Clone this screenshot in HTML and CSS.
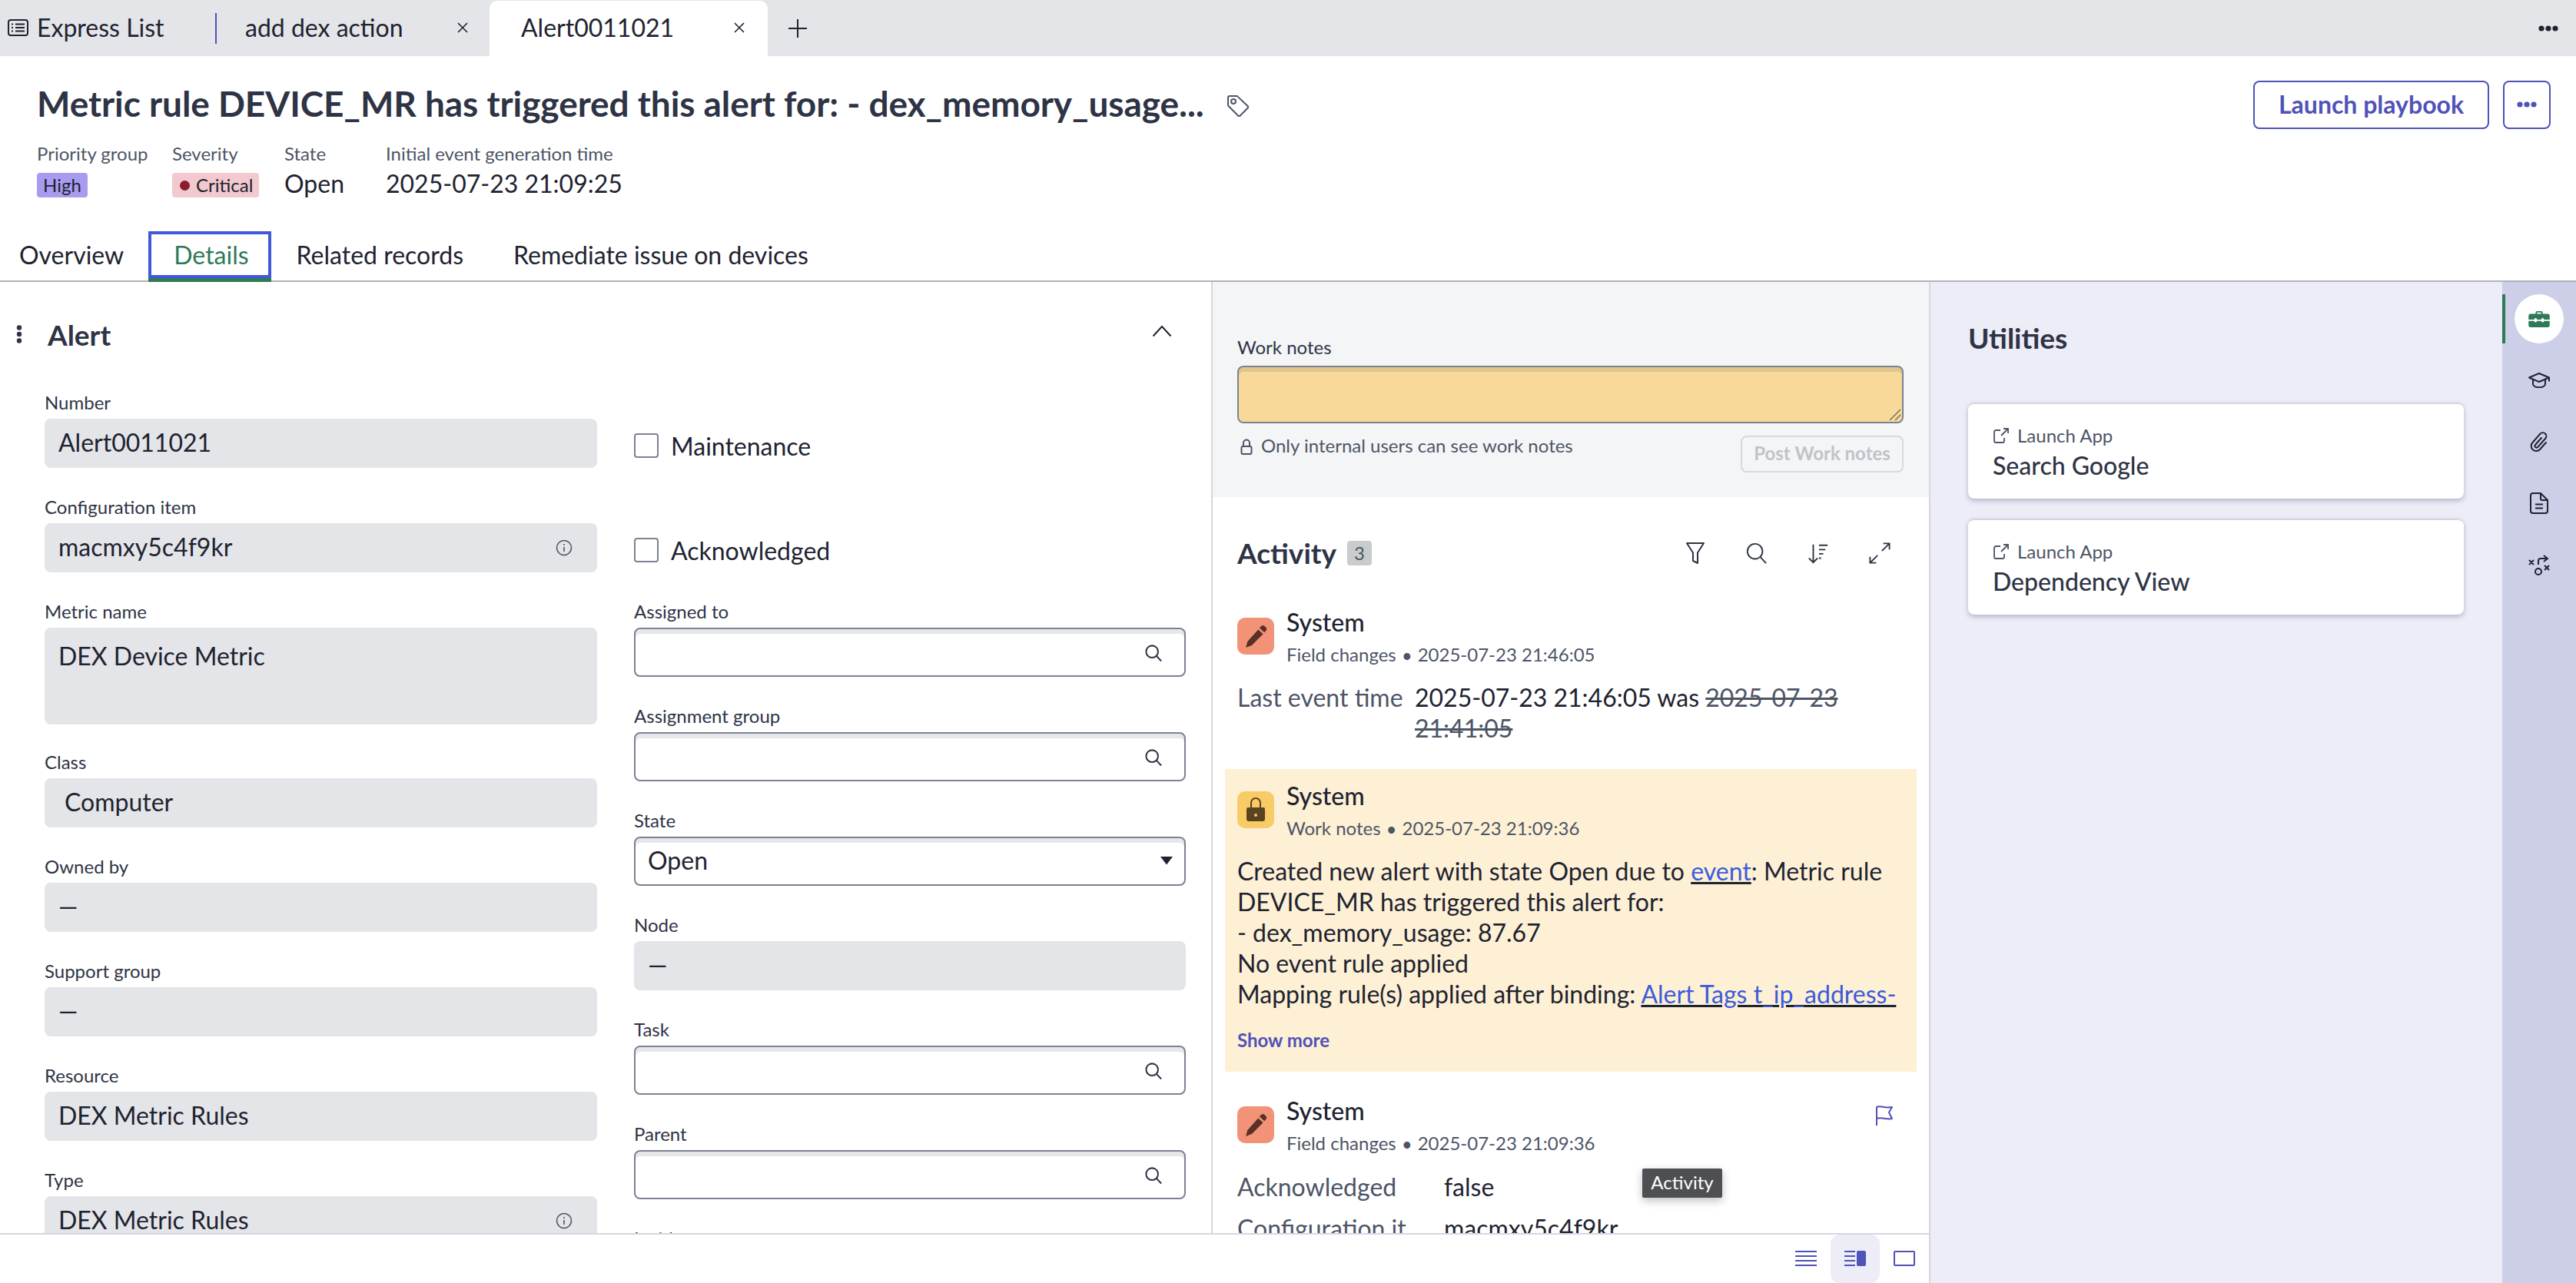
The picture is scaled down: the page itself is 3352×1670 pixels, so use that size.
FILE: index.html
```html
<!DOCTYPE html>
<html>
<head>
    <title>Alert0011021</title>
    <link rel="stylesheet" href="styles.css">
</head>
<body>
    <div class="tabbar">
        <div class="tab tab-home">
            <svg class="list-icon" width="27" height="22" viewBox="0 0 27 22" fill="none" stroke="#1e2330" stroke-width="2"><rect x="1" y="1" width="25" height="20" rx="3"/><path d="M10 6.500h12M10 11h12M10 15.500h12M5 6.500h2M5 11h2M5 15.500h2"/></svg>
            <span>Express List</span>
        </div>
        <div class="tab tab-dex">
            <span>add dex action</span>
            <svg width="16" height="16" viewBox="0 0 16 16" fill="none" stroke="#1e2330" stroke-width="1.600"><path d="M2 2l12 12M14 2L2 14"/></svg>
        </div>
        <div class="tab tab-current">
            <span>Alert0011021</span>
            <svg width="16" height="16" viewBox="0 0 16 16" fill="none" stroke="#1e2330" stroke-width="1.600"><path d="M2 2l12 12M14 2L2 14"/></svg>
        </div>
        <svg class="plus" width="26" height="26" viewBox="0 0 26 26" fill="none" stroke="#1e2330" stroke-width="2"><path d="M13 1v24M1 13h24"/></svg>
        <svg class="tabbar-more" width="26" height="8" viewBox="0 0 26 8" fill="#1e2330"><circle cx="4" cy="4" r="3.600"/><circle cx="13" cy="4" r="3.600"/><circle cx="22" cy="4" r="3.600"/></svg>
    </div>

    <div class="header">
        <div class="title-row">
            <h1>Metric rule DEVICE_MR has triggered this alert for: - dex_memory_usage...</h1>
            <svg class="tag-icon" width="28" height="28" viewBox="0 0 28 28" fill="none" stroke="#4d5566" stroke-width="2" stroke-linejoin="round"><path d="M3 1h9a2 2 0 0 1 1.500.6L26.500 14a2 2 0 0 1 0 2.800L16.800 26.500a2 2 0 0 1-2.800 0L1.600 14A2 2 0 0 1 1 12.500V3a2 2 0 0 1 2-2z"/><circle cx="8" cy="8" r="3"/></svg>
            <button class="btn-outline btn-playbook">Launch playbook</button>
            <button class="btn-outline btn-more">
                <svg width="26" height="8" viewBox="0 0 26 8" fill="#4f52b8"><circle cx="4" cy="4" r="3.600"/><circle cx="13" cy="4" r="3.600"/><circle cx="22" cy="4" r="3.600"/></svg>
            </button>
        </div>
        <div class="meta">
            <div class="meta-item meta-priority">
                <div class="meta-label">Priority group</div>
                <div class="badge badge-high">High</div>
            </div>
            <div class="meta-item meta-severity">
                <div class="meta-label">Severity</div>
                <div class="badge badge-critical"><i class="dot"></i>Critical</div>
            </div>
            <div class="meta-item meta-state">
                <div class="meta-label">State</div>
                <div class="meta-value">Open</div>
            </div>
            <div class="meta-item">
                <div class="meta-label">Initial event generation time</div>
                <div class="meta-value">2025-07-23 21:09:25</div>
            </div>
        </div>
    </div>

    <div class="nav">
        <div class="nav-tab nav-first">Overview</div>
        <div class="nav-tab nav-active">Details</div>
        <div class="nav-tab">Related records</div>
        <div class="nav-tab">Remediate issue on devices</div>
    </div>

    <div class="main">
        <div class="work-area">
            <div class="panes">
                <div class="form-pane">
                    <div class="section-head">
                        <svg class="kebab" width="8" height="24" viewBox="0 0 8 24" fill="#2e3445"><circle cx="4" cy="3.500" r="3.200"/><circle cx="4" cy="12" r="3.200"/><circle cx="4" cy="20.500" r="3.200"/></svg>
                        <h2>Alert</h2>
                        <svg class="chevron" width="26" height="16" viewBox="0 0 26 16" fill="none" stroke="#1e2330" stroke-width="2"><path d="M1.500 14.500 13 2l11.500 12.500"/></svg>
                    </div>
                    <div class="form-grid">
                        <div class="form-col">
                            <div class="field">
                                <label>Number</label>
                                <div class="input readonly">Alert0011021</div>
                            </div>
                            <div class="field">
                                <label>Configuration item</label>
                                <div class="input readonly">macmxy5c4f9kr
                                    <svg class="info" width="22" height="22" viewBox="0 0 22 22" fill="none" stroke="#4d5566" stroke-width="1.600"><circle cx="11" cy="11" r="9.500"/><path d="M11 10v6M11 6v2"/></svg>
                                </div>
                            </div>
                            <div class="field field-tall">
                                <label>Metric name</label>
                                <div class="input readonly input-tall">DEX Device Metric</div>
                            </div>
                            <div class="field">
                                <label>Class</label>
                                <div class="input readonly input-class">Computer</div>
                            </div>
                            <div class="field">
                                <label>Owned by</label>
                                <div class="input readonly">—</div>
                            </div>
                            <div class="field">
                                <label>Support group</label>
                                <div class="input readonly">—</div>
                            </div>
                            <div class="field">
                                <label>Resource</label>
                                <div class="input readonly">DEX Metric Rules</div>
                            </div>
                            <div class="field">
                                <label>Type</label>
                                <div class="input readonly">DEX Metric Rules
                                    <svg class="info" width="22" height="22" viewBox="0 0 22 22" fill="none" stroke="#4d5566" stroke-width="1.600"><circle cx="11" cy="11" r="9.500"/><path d="M11 10v6M11 6v2"/></svg>
                                </div>
                            </div>
                        </div>
                        <div class="form-col">
                            <div class="check-field"><span class="checkbox"></span>Maintenance</div>
                            <div class="check-field"><span class="checkbox"></span>Acknowledged</div>
                            <div class="field">
                                <label>Assigned to</label>
                                <div class="input editable">
                                    <svg class="search" width="22" height="22" viewBox="0 0 24 24" fill="none" stroke="#2e3445" stroke-width="2.200"><circle cx="10" cy="10" r="8.500"/><path d="M16 16l7 7.500"/></svg>
                                </div>
                            </div>
                            <div class="field">
                                <label>Assignment group</label>
                                <div class="input editable">
                                    <svg class="search" width="22" height="22" viewBox="0 0 24 24" fill="none" stroke="#2e3445" stroke-width="2.200"><circle cx="10" cy="10" r="8.500"/><path d="M16 16l7 7.500"/></svg>
                                </div>
                            </div>
                            <div class="field">
                                <label>State</label>
                                <div class="input editable">Open
                                    <svg class="caret" width="18" height="12" viewBox="0 0 18 12" fill="#1e2330"><path d="M1 1h16l-8 10.500z"/></svg>
                                </div>
                            </div>
                            <div class="field">
                                <label>Node</label>
                                <div class="input readonly">—</div>
                            </div>
                            <div class="field">
                                <label>Task</label>
                                <div class="input editable">
                                    <svg class="search" width="22" height="22" viewBox="0 0 24 24" fill="none" stroke="#2e3445" stroke-width="2.200"><circle cx="10" cy="10" r="8.500"/><path d="M16 16l7 7.500"/></svg>
                                </div>
                            </div>
                            <div class="field">
                                <label>Parent</label>
                                <div class="input editable">
                                    <svg class="search" width="22" height="22" viewBox="0 0 24 24" fill="none" stroke="#2e3445" stroke-width="2.200"><circle cx="10" cy="10" r="8.500"/><path d="M16 16l7 7.500"/></svg>
                                </div>
                            </div>
                            <div class="field">
                                <label>Incident</label>
                            </div>
                        </div>
                    </div>
                </div>

                <div class="activity-pane">
                    <div class="compose">
                        <label>Work notes</label>
                        <div class="notes-box">
                            <svg class="grip" width="16" height="16" viewBox="0 0 16 16" fill="none" stroke="#6a6a60" stroke-width="1.400"><path d="M1 15 15 1M8 15l7-7"/></svg>
                        </div>
                        <div class="compose-foot">
                            <svg width="16" height="24" viewBox="0 0 16 24" fill="none" stroke="#4d5566" stroke-width="2"><rect x="1.500" y="11" width="13" height="10" rx="2"/><path d="M4 11V6.500a4 4 0 0 1 8 0V11"/></svg>
                            <span>Only internal users can see work notes</span>
                            <button class="btn-disabled">Post Work notes</button>
                        </div>
                    </div>

                    <div class="activity-head">
                        <h2>Activity</h2>
                        <span class="count">3</span>
                        <div class="activity-tools">
                            <svg width="28" height="30" viewBox="0 0 26 30" fill="none" stroke="#2e3445" stroke-width="2" stroke-linejoin="round"><path d="M2 2h22l-8 12.500V28l-6-3V14.500z"/></svg>
                            <svg width="28" height="28" viewBox="0 0 30 30" fill="none" stroke="#2e3445" stroke-width="2"><circle cx="12.500" cy="12.500" r="10.500"/><path d="M20 20.500l8 8.500"/></svg>
                            <svg width="28" height="28" viewBox="0 0 30 30" fill="none" stroke="#2e3445" stroke-width="2"><path d="M8 3v25M2 22l6 6 6-6M16 4h12M16 10h9M16 16h6M16 22h3"/></svg>
                            <svg width="28" height="28" viewBox="0 0 30 30" fill="none" stroke="#2e3445" stroke-width="2"><path d="M18 12 28 2M20 1.500h8.500V10M12 18 2 28M10 28.500H1.500V20"/></svg>
                        </div>
                    </div>

                    <div class="entry entry-first">
                        <div class="entry-top">
                            <span class="entry-icon icon-pencil">
                                <svg width="32" height="32" viewBox="0 0 30 30" fill="#5a2f25"><path d="M22 2.500a3.200 3.200 0 0 1 4.500 1l1 1a3 3 0 0 1-.5 4.500l-1.500 1.500-6-5.500zM18 7l6 5.500L10.500 26 3 29l2-7.500z"/></svg>
                            </span>
                            <div>
                                <div class="entry-name">System</div>
                                <div class="entry-sub">Field changes <b>•</b> 2025-07-23 21:46:05</div>
                            </div>
                        </div>
                        <div class="change change-last">
                            <span class="change-label">Last event time</span>
                            <span class="change-value">2025-07-23 21:46:05 was <s>2025-07-23 21:41:05</s></span>
                        </div>
                    </div>

                    <div class="entry entry-note">
                        <div class="entry-top">
                            <span class="entry-icon icon-lock">
                                <svg width="26" height="38" viewBox="0 0 26 38" fill="#5a4420"><path d="M7 17V10a6 6 0 0 1 12 0v7" fill="none" stroke="#5a4420" stroke-width="2"/><path fill-rule="evenodd" d="M3 16h20a2 2 0 0 1 2 2v13a3 3 0 0 1-3 3H4a3 3 0 0 1-3-3V18a2 2 0 0 1 2-2zm10 8a2 2 0 1 0 0 4 2 2 0 0 0 0-4z"/></svg>
                            </span>
                            <div>
                                <div class="entry-name">System</div>
                                <div class="entry-sub">Work notes <b>•</b> 2025-07-23 21:09:36</div>
                            </div>
                        </div>
                        <div class="note-body">
                            Created new alert with state Open due to <a>event</a>: Metric rule<br>
                            DEVICE_MR has triggered this alert for:<br>
                            - dex_memory_usage: 87.67<br>
                            No event rule applied<br>
                            Mapping rule(s) applied after binding: <a>Alert Tags t_ip_address-</a>
                        </div>
                        <div class="show-more">Show more</div>
                    </div>

                    <div class="entry entry-last">
                        <div class="entry-top">
                            <span class="entry-icon icon-pencil">
                                <svg width="32" height="32" viewBox="0 0 30 30" fill="#5a2f25"><path d="M22 2.500a3.200 3.200 0 0 1 4.500 1l1 1a3 3 0 0 1-.5 4.500l-1.500 1.500-6-5.500zM18 7l6 5.500L10.500 26 3 29l2-7.500z"/></svg>
                            </span>
                            <div>
                                <div class="entry-name">System</div>
                                <div class="entry-sub">Field changes <b>•</b> 2025-07-23 21:09:36</div>
                            </div>
                            <svg class="flag" width="24" height="28" viewBox="0 0 24 28" fill="none" stroke="#4f52b8" stroke-width="2" stroke-linejoin="round"><path d="M2 27V3c4-3 8 2 20 0l-4 7 4 8c-8 2-14-3-20 0"/></svg>
                        </div>
                        <div class="change change-ack">
                            <span class="change-label">Acknowledged</span>
                            <span class="change-value">false</span>
                        </div>
                        <div class="change change-ack">
                            <span class="change-label">Configuration it</span>
                            <span class="change-value">macmxy5c4f9kr</span>
                        </div>
                    </div>

                    <div class="tooltip">Activity</div>
                </div>
            </div>

            <div class="view-bar">
                <span class="view-btn">
                    <svg width="28" height="20" viewBox="0 0 28 20" fill="none" stroke="#4f52b8" stroke-width="2"><path d="M0 1h28M0 7h28M0 13h28M0 19h28"/></svg>
                </span>
                <span class="view-btn view-btn-on">
                    <svg width="28" height="20" viewBox="0 0 28 20" fill="none" stroke="#4f52b8" stroke-width="2"><path d="M0 1h14M0 7h14M0 13h14M0 19h14"/><rect x="16" y="0" width="12" height="20" rx="2" fill="#4f52b8" stroke="none"/></svg>
                </span>
                <span class="view-btn">
                    <svg width="28" height="20" viewBox="0 0 28 20" fill="none" stroke="#4f52b8" stroke-width="2"><rect x="1" y="1" width="26" height="18" rx="1"/></svg>
                </span>
            </div>
        </div>

        <div class="utilities">
            <h2>Utilities</h2>
            <div class="util-card">
                <div class="util-kind">
                    <svg width="20" height="20" viewBox="0 0 20 20" fill="none" stroke="#4d5566" stroke-width="1.800"><path d="M9 3H3a2 2 0 0 0-2 2v12a2 2 0 0 0 2 2h9a2 2 0 0 0 2-2v-4M10 10l9-9M13 1h6v6"/></svg>
                    Launch App
                </div>
                <div class="util-name">Search Google</div>
            </div>
            <div class="util-card">
                <div class="util-kind">
                    <svg width="20" height="20" viewBox="0 0 20 20" fill="none" stroke="#4d5566" stroke-width="1.800"><path d="M9 3H3a2 2 0 0 0-2 2v12a2 2 0 0 0 2 2h9a2 2 0 0 0 2-2v-4M10 10l9-9M13 1h6v6"/></svg>
                    Launch App
                </div>
                <div class="util-name">Dependency View</div>
            </div>
        </div>

        <div class="rail">
            <span class="rail-btn rail-btn-on">
                <svg width="28" height="22" viewBox="0 0 30 24" fill="#2f7a56"><path fill-rule="evenodd" d="M10 5V3a2 2 0 0 1 2-2h6a2 2 0 0 1 2 2v2h7a3 3 0 0 1 3 3v5H22a2 2 0 0 0-4 0h-6a2 2 0 0 0-4 0H0V8a3 3 0 0 1 3-3zm2 0h6V3h-6z"/><path d="M0 15h8a2 2 0 0 0 4 0h6a2 2 0 0 0 4 0h8v6a3 3 0 0 1-3 3H3a3 3 0 0 1-3-3z"/></svg>
            </span>
            <span class="rail-btn">
                <svg width="28" height="20" viewBox="0 0 28 20" fill="none" stroke="#1e2330" stroke-width="2" stroke-linejoin="round"><path d="M14 1 27 6.500 14 12 1 6.500z"/><path d="M6 9v6c0 5.500 16 5.500 16 0V9M27 6.500v5"/></svg>
            </span>
            <span class="rail-btn">
                <svg width="24" height="28" viewBox="0 0 24 28" fill="none" stroke="#1e2330" stroke-width="2" stroke-linecap="round"><path d="M15 9 7 18a2.200 2.200 0 0 0 3.200 3L20 10a4.500 4.500 0 0 0-6.500-6.500L3.500 15a6.500 6.500 0 0 0 9.500 9l8-9"/></svg>
            </span>
            <span class="rail-btn">
                <svg width="24" height="28" viewBox="0 0 24 28" fill="none" stroke="#1e2330" stroke-width="2" stroke-linejoin="round"><path d="M4 1h10l9 9v14a3 3 0 0 1-3 3H4a3 3 0 0 1-3-3V4a3 3 0 0 1 3-3zM14 1v7a2 2 0 0 0 2 2h7M7 15.500h10M7 20.500h10"/></svg>
            </span>
            <span class="rail-btn">
                <svg width="28" height="27" viewBox="0 0 28 27" fill="none" stroke="#1e2330" stroke-width="2"><path d="M1 7l6 6M7 7l-6 6M13 13V8a3 3 0 0 1 3-3h9M20 1l5 4-5 4"/><circle cx="13" cy="22" r="4"/><path d="M21 14l6 6M27 14l-6 6"/></svg>
            </span>
        </div>
    </div>
</body>
</html>
```
FILE: styles.css
```css
* { box-sizing: border-box; }
html, body { margin: 0; padding: 0; }
body { width: 3352px; height: 1670px; overflow: hidden; font-family: "Lato", "Liberation Sans", sans-serif; font-size: 32px; color: #1e2330; background: white; display: flex; flex-direction: column; }
h1, h2 { margin: 0; font-weight: 700; color: #2e3445; }
h2 { font-size: 37px; line-height: 48px; }
label { display: block; font-size: 24px; line-height: 26px; color: #2e3445; }

.tabbar { height: 73px; background: #e4e5e9; display: flex; align-items: flex-end; flex: none; }
.tab { height: 72px; display: flex; align-items: center; padding-bottom: 3px; }
.tab-home { width: 281px; padding-left: 10px; gap: 11px; }
.tab-dex { width: 356px; padding: 0 27px 3px 36px; justify-content: space-between; position: relative; border-left: 2px solid transparent; }
.tab-dex::before { content: ""; position: absolute; left: -3px; top: 16px; height: 40px; width: 2px; background: #4f52b8; }
.tab-current { width: 362px; padding: 0 29px 3px 41px; justify-content: space-between; background: white; border-radius: 10px 10px 0 0; }
.plus { margin: 0 0 23px 26px; }
.tabbar-more { margin: 0 23px 32px auto; }

.header { height: 228px; padding: 32px 33px 0 48px; flex: none; }
.title-row { display: flex; align-items: center; height: 63px; }
h1 { font-size: 46px; line-height: 60px; margin-top: -4px; letter-spacing: -0.06px; }
.tag-icon { margin: 2px auto 0 30px; }
.btn-outline { height: 63px; background: white; border: 2px solid #4f52b8; border-radius: 8px; color: #4f52b8; font: 700 32px "Lato", sans-serif; padding: 0 0 2px; display: flex; align-items: center; justify-content: center; }
.btn-playbook { width: 307px; margin-right: 18px; }
.btn-more { width: 62px; }
.meta { display: flex; margin-top: 18px; }
.meta-priority { width: 176px; }
.meta-severity { width: 146px; }
.meta-state { width: 132px; }
.meta-label { font-size: 24px; line-height: 28px; color: #4d5566; margin-bottom: 11px; }
.meta-value { line-height: 32px; margin-top: -2px; }
.badge { display: flex; width: fit-content; align-items: center; height: 32px; border-radius: 4px; font-size: 24px; line-height: 28px; padding: 0 8px; }
.badge-high { background: #a99cf0; }
.badge-critical { background: #f2c9cf; padding-left: 10px; }
.dot { width: 13px; height: 13px; border-radius: 50%; background: #8a1c2b; margin-right: 8px; }

.nav { height: 66px; border-bottom: 2px solid #b0b3c0; display: flex; padding-left: 25px; flex: none; }
.nav-tab { height: 61px; padding: 0 32px 0 33px; line-height: 62px; }
.nav-first { padding-left: 0; padding-right: 32px; }
.nav-active { color: #2f7a56; border: 4px solid #4059d9; padding: 0 25px 0 29px; line-height: 54px; box-shadow: 0 5px 0 #2f7a56; }

.main { flex: 1; display: flex; min-height: 0; }
.work-area { width: 2510px; display: flex; flex-direction: column; }
.panes { height: 1238px; display: flex; overflow: hidden; }
.form-pane { width: 1578px; border-right: 2px solid #d5d6e0; overflow: hidden; }
.section-head { height: 138px; margin-bottom: 6px; display: flex; align-items: center; padding-left: 21px; }
.section-head h2 { margin-left: 33px; }
.kebab { margin-bottom: 2px; }
.chevron { margin-left: auto; margin-right: 51px; margin-bottom: 10px; }
.form-grid { display: grid; grid-template-columns: 719px 718px; column-gap: 48px; padding-left: 58px; }
.field { margin-bottom: 38px; }
.field label { margin-bottom: 8px; }
.field-tall { margin-bottom: 36px; }
.input { height: 64px; border-radius: 8px; padding: 0 18px 4px; display: flex; align-items: center; justify-content: space-between; position: relative; }
.readonly { background: #e4e5e9; }
.input-tall { height: 126px; align-items: flex-start; padding-top: 17px; line-height: 40px; }
.input-class { padding-left: 26px; }
.editable { background: white; border: 2px solid #7b8294; padding: 0 16px 4px; box-shadow: inset 0 6px 0 #e5e7e9; }
.info { margin-right: 14px; margin-top: 4px; }
.search { margin-left: auto; margin-right: 13px; margin-top: 6px; }
.caret { margin-right: -2px; margin-top: 2px; }
.check-field { height: 98px; padding-top: 40px; margin-bottom: 38px; display: flex; align-items: center; gap: 16px; }
.checkbox { width: 32px; height: 32px; border: 2px solid #7b8294; border-radius: 4px; background: white; }

.activity-pane { width: 932px; position: relative; overflow: hidden; }
.compose { height: 280px; background: #f4f5f7; padding: 72px 33px 0 32px; }
.compose label { margin-bottom: 11px; }
.notes-box { height: 75px; background: #f9d999; border: 2px solid #7b8294; border-radius: 8px; box-shadow: inset 0 6px 0 #e0c58b; position: relative; }
.grip { position: absolute; right: 1px; bottom: 1px; }
.compose-foot { display: flex; align-items: flex-start; margin-top: 16px; font-size: 24px; color: #4d5566; }
.compose-foot svg { margin: 3px 11px 0 4px; }
.compose-foot span { line-height: 26px; }
.btn-disabled { margin-left: auto; width: 212px; height: 48px; background: transparent; border: 2px solid #d7d9dd; border-radius: 8px; color: #c0c3c9; font: 700 24px "Lato", sans-serif; padding: 0 0 4px; }

.activity-head { height: 48px; margin: 49px 33px 0 32px; display: flex; align-items: center; }
.count { width: 32px; height: 32px; margin-left: 14px; background: #c8cccd; border-radius: 4px; font-size: 24px; color: #4d5566; text-align: center; line-height: 32px; }
.activity-tools { margin-left: auto; margin-right: 17px; display: flex; gap: 52px; align-items: center; }

.entry-first { padding: 48px 33px 0 32px; height: 257px; }
.entry-note { margin: 0 16px; padding: 17px 17px 25px 16px; background: #fdf0d5; }
.entry-last { padding: 33px 33px 0 32px; }
.entry-top { display: flex; gap: 16px; position: relative; }
.entry-icon { width: 48px; height: 48px; margin-top: 12px; border-radius: 10px; display: flex; align-items: center; justify-content: center; flex: none; }
.icon-pencil { background: #f29378; }
.icon-lock { background: #f9cb66; }
.entry-name { line-height: 36px; margin-bottom: 8px; font-weight: 500; }
.entry-sub { font-size: 24px; line-height: 32px; color: #4d5566; }
.entry-sub b { font-size: 20px; padding: 0 2px; }
.flag { position: absolute; right: 13px; top: 10px; }
.change { display: flex; line-height: 40px; margin-top: 19px; }
.change-label { flex: none; color: #4d5566; }
.change-last .change-label { width: 231px; }
.change-ack { margin-top: 14px; }
.entry-top + .change-ack { margin-top: 20px; }
.change-ack .change-label { width: 269px; }
.change-value { flex: 1; }
.change-value s { color: #4d5566; }
.note-body { line-height: 40px; margin-top: 19px; white-space: nowrap; }
.note-body a { color: #3b5bdb; text-decoration: underline; text-decoration-color: #1e2330; }
.show-more { font-size: 24px; font-weight: 700; line-height: 32px; color: #5052b8; margin-top: 24px; }
.tooltip { position: absolute; left: 559px; top: 1154px; height: 38px; width: 104px; background: #4d4f52; color: white; font-size: 24px; line-height: 36px; text-align: center; border-radius: 2px; box-shadow: 0 4px 12px rgba(0,0,0,0.25); }

.view-bar { flex: 1; border-top: 2px solid #d5d6e0; display: flex; justify-content: flex-end; }
.view-btn { width: 64px; display: flex; align-items: center; justify-content: center; padding-bottom: 2px; }
.view-btn-on { background: #ecedf7; border-radius: 12px; }

.utilities { width: 746px; border-left: 2px solid #d5d6e0; background: #ecedf7; padding: 49px 50px 0 49px; }
.utilities h2 { margin-bottom: 60px; }
.util-card { height: 125px; background: white; border-radius: 8px; border-top: 2px solid #d5d6e0; padding: 27px 32px 0; margin-bottom: 26px; box-shadow: 0 3px 6px rgba(60,60,90,0.3); }
.util-kind { display: flex; align-items: center; gap: 11px; font-size: 24px; line-height: 28px; color: #4d5566; }
.util-kind svg { margin-left: 1px; }
.util-name { line-height: 40px; margin-top: 5px; color: #2e3445; font-weight: 500; }

.rail { width: 96px; background: #cdcee8; padding-top: 16px; display: flex; flex-direction: column; align-items: center; position: relative; }
.rail-btn { width: 64px; height: 64px; margin-bottom: 16px; display: flex; align-items: center; justify-content: center; border-radius: 50%; }
.rail-btn-on { background: white; }
.rail::before { content: ""; position: absolute; left: 0; top: 16px; width: 4px; height: 64px; background: #2f7a56; }
```
